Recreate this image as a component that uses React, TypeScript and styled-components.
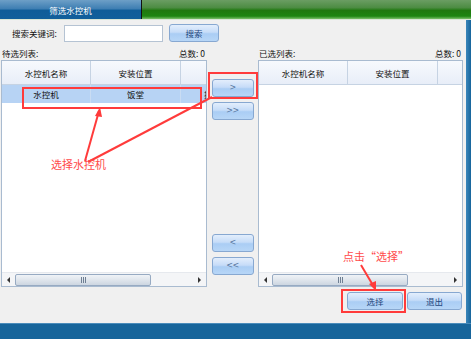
import styled, { createGlobalStyle } from "styled-components";

const GlobalStyle = createGlobalStyle`
  html, body { margin: 0; padding: 0; background: #f0f0f0; }
  body { font-family: "Noto Sans CJK SC", "Noto Sans", sans-serif; }
`;

const Frame = styled.div`
  position: relative;
  width: 471px;
  height: 339px;
  display: grid;
  grid-template-rows: 20px 1fr 16px;
  background: #f0f0f0;
  overflow: hidden;
  font-size: 8.5px;
  color: #111;
`;

const TitleBar = styled.div`
  display: grid;
  grid-template-columns: 141px 1px 1fr;
  border-bottom: 1px solid #d9e6d6;
`;

const Tab = styled.div`
  display: flex;
  align-items: center;
  justify-content: center;
  color: #fff;
  font-size: 8.5px;
  background: linear-gradient(#6d9fc7 0%, #3f7fb3 45%, #0f5d99 55%, #115f9b 100%);
`;

const Divider = styled.div`
  background: #111;
`;

const GreenFill = styled.div`
  background: linear-gradient(#6b9d63 0%, #4d8c43 40%, #1f780f 55%, #1d8511 85%, #7cc06c 100%);
`;

const Body = styled.div`
  display: grid;
  grid-template-columns: 1fr 5px;
  min-height: 0;
`;

const EdgeStrip = styled.div`
  background: linear-gradient(90deg, #3a86ba, #16649b);
`;

const Content = styled.div`
  display: flex;
  flex-direction: column;
  padding: 4px 0 0 1px;
`;

const SearchRow = styled.div`
  display: flex;
  align-items: center;
  height: 18px;
  padding-left: 11px;
`;

const SearchLabel = styled.span`
  width: 52px;
`;

const SearchInput = styled.input`
  box-sizing: border-box;
  width: 99px;
  height: 17px;
  margin: 1px 6px 0 0;
  border: 1px solid #b5c3d3;
  background: #fff;
  outline: none;
`;

const Button = styled.button<{ $w: number }>`
  box-sizing: border-box;
  width: ${(p) => p.$w}px;
  height: 18px;
  padding: 0;
  border: 1px solid #87a8d1;
  border-radius: 3px;
  background: linear-gradient(#e3eefc 0%, #c6dcf8 45%, #aacdf4 55%, #b7d6f7 100%);
  color: #24467c;
  font-family: "Noto Sans CJK SC", sans-serif;
  font-size: 8.5px;
  line-height: 16px;
  display: flex;
  align-items: center;
  justify-content: center;
`;

const Chevron = styled.span`
  font-family: "DejaVu Sans", sans-serif;
  font-size: 8px;
  color: #56769f;
  letter-spacing: -0.5px;
`;

const Lists = styled.div`
  display: grid;
  grid-template-columns: 206px 51px 205px;
  grid-template-rows: 14px 227px;
  margin-top: 4px;
`;

const ListCaption = styled.div`
  display: flex;
  justify-content: space-between;
  align-items: center;
  padding: 0 2px 0 1px;
`;

const Panel = styled.div`
  grid-row: 2;
  box-sizing: border-box;
  border: 1px solid #a9bbd0;
  background: #fff;
  display: flex;
  flex-direction: column;
  overflow: hidden;
`;

const TableArea = styled.div`
  flex: 1;
  overflow: hidden;
`;

const RowGrid = styled.div`
  display: grid;
  grid-template-columns: 89px 90px 100px;
  width: 279px;
`;

const HeadCell = styled.div`
  box-sizing: border-box;
  height: 24px;
  display: flex;
  align-items: center;
  justify-content: center;
  border-right: 1px solid #c6d3e3;
  border-bottom: 1px solid #c6d3e3;
  background: linear-gradient(#f7f9fd, #e8eef8);
`;

const DataRow = styled(RowGrid)`
  height: 18px;
  background: #b7d3f4;
`;

const DataCell = styled.div<{ $left?: boolean }>`
  display: flex;
  align-items: center;
  justify-content: ${(p) => (p.$left ? "flex-start" : "center")};
  padding-left: ${(p) => (p.$left ? "23px" : "0")};
  border-right: 1px solid #c9dcf3;
  white-space: nowrap;
`;

const ScrollBar = styled.div`
  height: 13px;
  display: flex;
  align-items: center;
  background: #f4f5f7;
  border-top: 1px solid #e6e9ee;
`;

const ScrollArrow = styled.div<{ $dir: "left" | "right" }>`
  width: 13px;
  height: 13px;
  display: flex;
  align-items: center;
  justify-content: center;
  &::before {
    content: "";
    border-top: 3px solid transparent;
    border-bottom: 3px solid transparent;
    ${(p) => (p.$dir === "left" ? "border-right: 3px solid #333;" : "border-left: 3px solid #333;")}
  }
`;

const ScrollTrack = styled.div`
  flex: 1;
  height: 13px;
  display: flex;
`;

const Thumb = styled.div`
  box-sizing: border-box;
  width: 136px;
  height: 12px;
  margin-top: 1px;
  border: 1px solid #97aac2;
  border-radius: 2px;
  background: linear-gradient(#f0f3f7, #dfe5ec 50%, #cdd6e1);
  display: flex;
  align-items: center;
  justify-content: center;
  gap: 1px;
`;

const Grip = styled.span`
  width: 1px;
  height: 6px;
  background: #6f7f93;
`;

const MoveColumn = styled.div`
  grid-row: 2;
  grid-column: 2;
  display: flex;
  flex-direction: column;
  align-items: center;
  gap: 5px;
  padding: 19px 0 12px 0;
`;

const Spacer = styled.div`
  flex: 1;
`;

const ActionRow = styled.div`
  display: flex;
  justify-content: flex-end;
  gap: 4px;
  padding-right: 4px;
  margin-top: 5px;
`;

const Footer = styled.div`
  background: #17659b;
  border-top: 1px solid #4a8cbb;
`;

const Overlay = styled.svg`
  position: absolute;
  left: 0;
  top: 0;
  pointer-events: none;
`;

const Note = styled.span<{ $x: number; $y: number }>`
  position: absolute;
  left: ${(p) => p.$x}px;
  top: ${(p) => p.$y}px;
  color: #ff4a4a;
  font-size: 11px;
  line-height: 13px;
  white-space: nowrap;
`;

function ListPanel({ rows }: { rows: string[][] }) {
  return (
    <Panel>
      <TableArea>
        <RowGrid>
          <HeadCell>水控机名称</HeadCell>
          <HeadCell>安装位置</HeadCell>
          <HeadCell />
        </RowGrid>
        {rows.map((r, i) => (
          <DataRow key={i}>
            <DataCell>{r[0]}</DataCell>
            <DataCell>{r[1]}</DataCell>
            <DataCell $left>{r[2]}</DataCell>
          </DataRow>
        ))}
      </TableArea>
      <ScrollBar>
        <ScrollArrow $dir="left" />
        <ScrollTrack>
          <Thumb>
            <Grip />
            <Grip />
            <Grip />
          </Thumb>
        </ScrollTrack>
        <ScrollArrow $dir="right" />
      </ScrollBar>
    </Panel>
  );
}

export default function App() {
  return (
    <>
      <GlobalStyle />
      <Frame>
        <TitleBar>
          <Tab>筛选水控机</Tab>
          <Divider />
          <GreenFill />
        </TitleBar>
        <Body>
          <Content>
            <SearchRow>
              <SearchLabel>搜索关键词:</SearchLabel>
              <SearchInput />
              <Button $w={50}>搜索</Button>
            </SearchRow>
            <Lists>
              <ListCaption>
                <span>待选列表:</span>
                <span>总数: 0</span>
              </ListCaption>
              <div />
              <ListCaption>
                <span>已选列表:</span>
                <span>总数: 0</span>
              </ListCaption>
              <ListPanel rows={[["水控机", "饭堂", "控制器"]]} />
              <MoveColumn>
                <Button $w={42}><Chevron>&gt;</Chevron></Button>
                <Button $w={42}><Chevron>&gt;&gt;</Chevron></Button>
                <Spacer />
                <Button $w={42}><Chevron>&lt;</Chevron></Button>
                <Button $w={42}><Chevron>&lt;&lt;</Chevron></Button>
              </MoveColumn>
              <ListPanel rows={[]} />
            </Lists>
            <ActionRow>
              <Button $w={56}>选择</Button>
              <Button $w={55}>退出</Button>
            </ActionRow>
          </Content>
          <EdgeStrip />
        </Body>
        <Footer />
        <Overlay width={471} height={339} viewBox="0 0 471 339">
          <g fill="none" stroke="#ff3b3b" strokeWidth={2}>
            <rect x={23} y={88} width={178} height={20} />
            <rect x={209} y={73} width={48} height={25} />
            <rect x={342} y={290} width={63} height={22} />
            <line x1={85} y1={161} x2={99} y2={111} />
            <line x1={88} y1={162} x2={212} y2={97} />
            <line x1={361} y1={265} x2={374} y2={287} />
          </g>
          <g fill="#ff3b3b">
            <polygon points="100,107 95,116 102,117" />
            <polygon points="376,291 369,284 376,281" />
          </g>
        </Overlay>
        <Note $x={51} $y={158}>选择水控机</Note>
        <Note $x={343} $y={250}>点击“选择”</Note>
      </Frame>
    </>
  );
}
